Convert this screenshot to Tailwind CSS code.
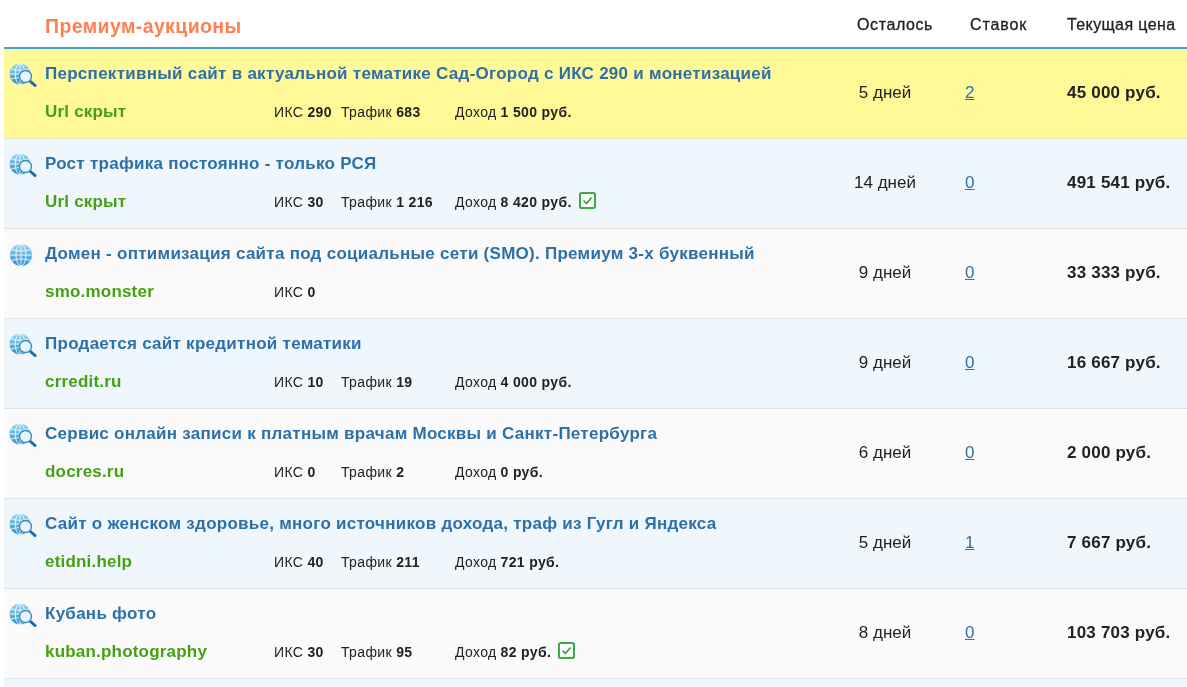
<!DOCTYPE html>
<html lang="ru">
<head>
  <meta charset="UTF-8">
  <title>Премиум-аукционы</title>
  <script src="https://cdn.jsdelivr.net/npm/@tailwindcss/browser@4"></script>
</head>
<body class="bg-white h-[687px] overflow-hidden font-['Liberation_Sans',Arial,sans-serif] text-[#222]">
  <svg class="absolute w-0 h-0">
    <defs>
      <linearGradient id="ball" x1="0" y1="0" x2="0" y2="1">
        <stop offset="0" stop-color="#9ad6f2"/>
        <stop offset="1" stop-color="#2f90cc"/>
      </linearGradient>
      <symbol id="globe" viewBox="0 0 28 24">
        <circle cx="12" cy="12" r="11" fill="url(#ball)"/>
        <g fill="none" stroke="#fff" stroke-width="1" opacity=".85">
          <ellipse cx="12" cy="12" rx="5" ry="11"/>
          <path d="M12 1v22M1 12h22M3 6.5c5 2 13 2 18 0M3 17.5c5-2 13-2 18 0"/>
        </g>
      </symbol>
      <symbol id="globe-search" viewBox="0 0 28 24">
        <circle cx="11" cy="11" r="10.5" fill="url(#ball)"/>
        <g fill="none" stroke="#fff" stroke-width="1" opacity=".85">
          <ellipse cx="11" cy="11" rx="4.8" ry="10.5"/>
          <path d="M11 .5v21M.5 11h21M2 5.8c5 2 13 2 18 0M2 16.2c5-2 13-2 18 0"/>
        </g>
        <path d="M21.5 18.5l4.5 4" stroke="#1a6aa6" stroke-width="3" stroke-linecap="round"/>
        <circle cx="16.5" cy="13.5" r="6" fill="#e6f5fc" stroke="#3a8dbf" stroke-width="1.4"/>
      </symbol>
      <symbol id="check" viewBox="0 0 17 17">
        <rect x="1" y="1" width="15" height="15" rx="1.5" fill="#fff" stroke="#3aab45" stroke-width="2"/>
        <path d="M4.5 8.5l3 3 5-6" fill="none" stroke="#2f9c3c" stroke-width="1.6"/>
      </symbol>
    </defs>
  </svg>

  <div class="pl-1 blur-[0.3px]">
    <!-- Шапка таблицы -->
    <div class="flex items-center h-[47px] text-[16px] [-webkit-text-stroke:0.3px]">
      <div class="w-[812px] pl-[41px] pt-[7px] text-[19.5px] font-bold tracking-[0.4px] text-[#ff7f50] [-webkit-text-stroke:0]">Премиум-аукционы</div>
      <div class="w-[154px] pl-[41px] pt-[2px] tracking-[0.6px]">Осталось</div>
      <div class="w-[97px] pt-[2px] tracking-[0.9px]">Ставок</div>
      <div class="pt-[2px] tracking-[0.4px]">Текущая цена</div>
    </div>

    <div class="border-t-2 border-[#3aa6d8]">
      <!-- Строка 1 -->
      <div class="flex h-[90px] bg-[#fff998] border-b border-[#e4e4e4]">
        <svg class="w-[28px] h-[24px] ml-[5px] mt-[14px] shrink-0"><use href="#globe-search"/></svg>
        <div class="w-[774px] pl-[8px] pt-[14px] shrink-0">
          <div class="text-[17px] font-bold tracking-[0.27px] text-[#2d6fa8] leading-[22px]">Перспективный сайт в актуальной тематике Сад-Огород с ИКС 290 и монетизацией</div>
          <div class="flex items-center h-[20px] mt-[17px] text-[14px] tracking-[0.35px]">
            <div class="w-[229px] text-[17px] tracking-[0.2px] font-bold text-[#46a014]">Url скрыт</div>
            <div class="w-[67px]">ИКС <b>290</b></div>
            <div class="w-[114px]">Трафик <b>683</b></div>
            <div class="flex items-center pt-px">Доход <b class="ml-1">1 500 руб.</b></div>
          </div>
        </div>
        <div class="w-[148px] text-center pt-[31px] text-[17px] shrink-0">5 дней</div>
        <div class="w-[102px] pl-[6px] pt-[31px] text-[17px] shrink-0"><a class="underline text-[#2d6fa8]">2</a></div>
        <div class="pl-[6px] pt-[31px] text-[17px] tracking-[0.2px] font-bold">45 000 руб.</div>
      </div>
      <!-- Строка 2 -->
      <div class="flex h-[90px] bg-[#eff7fd] border-b border-[#e4e4e4]">
        <svg class="w-[28px] h-[24px] ml-[5px] mt-[14px] shrink-0"><use href="#globe-search"/></svg>
        <div class="w-[774px] pl-[8px] pt-[14px] shrink-0">
          <div class="text-[17px] font-bold tracking-[0.27px] text-[#2d6fa8] leading-[22px]">Рост трафика постоянно - только РСЯ</div>
          <div class="flex items-center h-[20px] mt-[17px] text-[14px] tracking-[0.35px]">
            <div class="w-[229px] text-[17px] tracking-[0.2px] font-bold text-[#46a014]">Url скрыт</div>
            <div class="w-[67px]">ИКС <b>30</b></div>
            <div class="w-[114px]">Трафик <b>1 216</b></div>
            <div class="flex items-center pt-px">Доход <b class="ml-1">8 420 руб.</b><svg class="w-[17px] h-[17px] ml-[7px] -mt-[4px]"><use href="#check"/></svg></div>
          </div>
        </div>
        <div class="w-[148px] text-center pt-[31px] text-[17px] shrink-0">14 дней</div>
        <div class="w-[102px] pl-[6px] pt-[31px] text-[17px] shrink-0"><a class="underline text-[#2d6fa8]">0</a></div>
        <div class="pl-[6px] pt-[31px] text-[17px] tracking-[0.2px] font-bold">491 541 руб.</div>
      </div>
      <!-- Строка 3 -->
      <div class="flex h-[90px] bg-[#fafafa] border-b border-[#e4e4e4]">
        <svg class="w-[28px] h-[24px] ml-[5px] mt-[14px] shrink-0"><use href="#globe"/></svg>
        <div class="w-[774px] pl-[8px] pt-[14px] shrink-0">
          <div class="text-[17px] font-bold tracking-[0.27px] text-[#2d6fa8] leading-[22px]">Домен - оптимизация сайта под социальные сети (SMO). Премиум 3-х буквенный</div>
          <div class="flex items-center h-[20px] mt-[17px] text-[14px] tracking-[0.35px]">
            <div class="w-[229px] text-[17px] tracking-[0.2px] font-bold text-[#46a014]">smo.monster</div>
            <div class="w-[67px]">ИКС <b>0</b></div>
          </div>
        </div>
        <div class="w-[148px] text-center pt-[31px] text-[17px] shrink-0">9 дней</div>
        <div class="w-[102px] pl-[6px] pt-[31px] text-[17px] shrink-0"><a class="underline text-[#2d6fa8]">0</a></div>
        <div class="pl-[6px] pt-[31px] text-[17px] tracking-[0.2px] font-bold">33 333 руб.</div>
      </div>
      <!-- Строка 4 -->
      <div class="flex h-[90px] bg-[#eff7fd] border-b border-[#e4e4e4]">
        <svg class="w-[28px] h-[24px] ml-[5px] mt-[14px] shrink-0"><use href="#globe-search"/></svg>
        <div class="w-[774px] pl-[8px] pt-[14px] shrink-0">
          <div class="text-[17px] font-bold tracking-[0.27px] text-[#2d6fa8] leading-[22px]">Продается сайт кредитной тематики</div>
          <div class="flex items-center h-[20px] mt-[17px] text-[14px] tracking-[0.35px]">
            <div class="w-[229px] text-[17px] tracking-[0.2px] font-bold text-[#46a014]">crredit.ru</div>
            <div class="w-[67px]">ИКС <b>10</b></div>
            <div class="w-[114px]">Трафик <b>19</b></div>
            <div class="flex items-center pt-px">Доход <b class="ml-1">4 000 руб.</b></div>
          </div>
        </div>
        <div class="w-[148px] text-center pt-[31px] text-[17px] shrink-0">9 дней</div>
        <div class="w-[102px] pl-[6px] pt-[31px] text-[17px] shrink-0"><a class="underline text-[#2d6fa8]">0</a></div>
        <div class="pl-[6px] pt-[31px] text-[17px] tracking-[0.2px] font-bold">16 667 руб.</div>
      </div>
      <!-- Строка 5 -->
      <div class="flex h-[90px] bg-[#fafafa] border-b border-[#e4e4e4]">
        <svg class="w-[28px] h-[24px] ml-[5px] mt-[14px] shrink-0"><use href="#globe-search"/></svg>
        <div class="w-[774px] pl-[8px] pt-[14px] shrink-0">
          <div class="text-[17px] font-bold tracking-[0.27px] text-[#2d6fa8] leading-[22px]">Сервис онлайн записи к платным врачам Москвы и Санкт-Петербурга</div>
          <div class="flex items-center h-[20px] mt-[17px] text-[14px] tracking-[0.35px]">
            <div class="w-[229px] text-[17px] tracking-[0.2px] font-bold text-[#46a014]">docres.ru</div>
            <div class="w-[67px]">ИКС <b>0</b></div>
            <div class="w-[114px]">Трафик <b>2</b></div>
            <div class="flex items-center pt-px">Доход <b class="ml-1">0 руб.</b></div>
          </div>
        </div>
        <div class="w-[148px] text-center pt-[31px] text-[17px] shrink-0">6 дней</div>
        <div class="w-[102px] pl-[6px] pt-[31px] text-[17px] shrink-0"><a class="underline text-[#2d6fa8]">0</a></div>
        <div class="pl-[6px] pt-[31px] text-[17px] tracking-[0.2px] font-bold">2 000 руб.</div>
      </div>
      <!-- Строка 6 -->
      <div class="flex h-[90px] bg-[#eff7fd] border-b border-[#e4e4e4]">
        <svg class="w-[28px] h-[24px] ml-[5px] mt-[14px] shrink-0"><use href="#globe-search"/></svg>
        <div class="w-[774px] pl-[8px] pt-[14px] shrink-0">
          <div class="text-[17px] font-bold tracking-[0.27px] text-[#2d6fa8] leading-[22px]">Сайт о женском здоровье, много источников дохода, траф из Гугл и Яндекса</div>
          <div class="flex items-center h-[20px] mt-[17px] text-[14px] tracking-[0.35px]">
            <div class="w-[229px] text-[17px] tracking-[0.2px] font-bold text-[#46a014]">etidni.help</div>
            <div class="w-[67px]">ИКС <b>40</b></div>
            <div class="w-[114px]">Трафик <b>211</b></div>
            <div class="flex items-center pt-px">Доход <b class="ml-1">721 руб.</b></div>
          </div>
        </div>
        <div class="w-[148px] text-center pt-[31px] text-[17px] shrink-0">5 дней</div>
        <div class="w-[102px] pl-[6px] pt-[31px] text-[17px] shrink-0"><a class="underline text-[#2d6fa8]">1</a></div>
        <div class="pl-[6px] pt-[31px] text-[17px] tracking-[0.2px] font-bold">7 667 руб.</div>
      </div>
      <!-- Строка 7 -->
      <div class="flex h-[90px] bg-[#fafafa] border-b border-[#e4e4e4]">
        <svg class="w-[28px] h-[24px] ml-[5px] mt-[14px] shrink-0"><use href="#globe-search"/></svg>
        <div class="w-[774px] pl-[8px] pt-[14px] shrink-0">
          <div class="text-[17px] font-bold tracking-[0.27px] text-[#2d6fa8] leading-[22px]">Кубань фото</div>
          <div class="flex items-center h-[20px] mt-[17px] text-[14px] tracking-[0.35px]">
            <div class="w-[229px] text-[17px] tracking-[0.2px] font-bold text-[#46a014]">kuban.photography</div>
            <div class="w-[67px]">ИКС <b>30</b></div>
            <div class="w-[114px]">Трафик <b>95</b></div>
            <div class="flex items-center pt-px">Доход <b class="ml-1">82 руб.</b><svg class="w-[17px] h-[17px] ml-[7px] -mt-[4px]"><use href="#check"/></svg></div>
          </div>
        </div>
        <div class="w-[148px] text-center pt-[31px] text-[17px] shrink-0">8 дней</div>
        <div class="w-[102px] pl-[6px] pt-[31px] text-[17px] shrink-0"><a class="underline text-[#2d6fa8]">0</a></div>
        <div class="pl-[6px] pt-[31px] text-[17px] tracking-[0.2px] font-bold">103 703 руб.</div>
      </div>
      <div class="h-[10px] bg-[#eff7fd]"></div>
    </div>
  </div>
</body>
</html>
